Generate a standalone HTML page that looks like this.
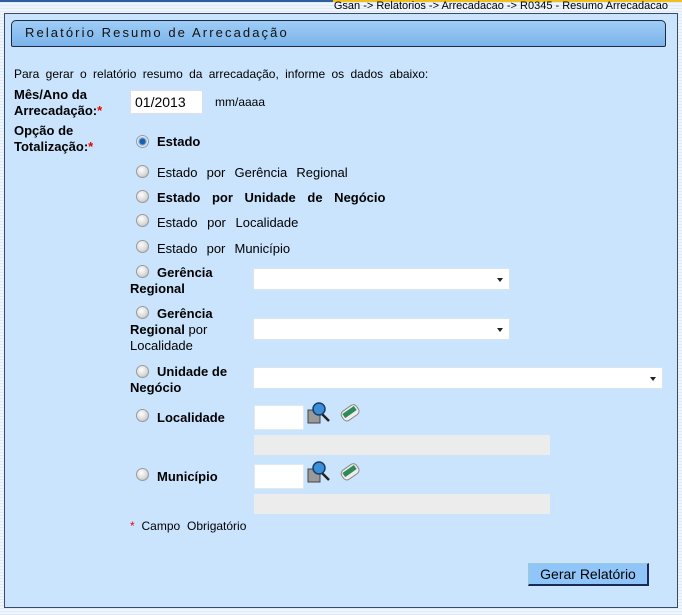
<!DOCTYPE html>
<html><head><meta charset="utf-8"><style>
body{margin:0;width:682px;height:615px;overflow:hidden;position:relative;font-family:"Liberation Sans",Arial,sans-serif;
background:repeating-linear-gradient(#eef5fc 0 2px,#dfeaf6 2px 3px);}
.a{position:absolute;white-space:nowrap}
.b{font-weight:bold;font-size:13px}
.t{font-size:12px}
.rad{position:absolute;width:11px;height:11px;border-radius:50%;background:radial-gradient(circle at 40% 35%,#fff,#d8d8d8 60%,#a8a8a8);border:1px solid #9a9a9a}
.sel{position:absolute;background:#fff;border:1px solid #d8e4f0;height:20px}
.sel:after{content:"";position:absolute;right:6px;top:9px;border:3.5px solid transparent;border-top:4px solid #222}
.inp{position:absolute;background:#fff;border:1px solid #c8d8e8}
.gray{position:absolute;background:#ececec}
</style></head><body>
<div class="a" style="left:0;top:0;width:682px;height:2px;background:#2f5f9c"></div>
<div class="a" style="left:333px;top:0;width:349px;height:2px;background:#f0c020"></div>
<div class="a" style="right:14px;top:0px;font-size:11px;color:#000">Gsan -&gt; Relatorios -&gt; Arrecadacao -&gt; R0345 - Resumo Arrecadacao</div>
<div class="a" style="left:4px;top:13px;width:672px;height:593px;background:#cbe4fd;border:1px solid #3a4a66"></div>
<div class="a" style="left:11px;top:20px;width:653px;height:25px;border:1px solid #1e2a44;border-radius:5px 5px 2px 2px;background:linear-gradient(#9fcdf6,#7bb3ea);"></div>
<div class="a" style="left:25px;top:25px;font-size:13px;letter-spacing:2.1px;color:#111">Relatório Resumo de Arrecadação</div>
<div class="a t" style="left:14px;top:67px;word-spacing:3px">Para gerar o relatório resumo da arrecadação, informe os dados abaixo:</div>
<div class="a b" style="left:14px;top:87px;line-height:16px">Mês/Ano da<br>Arrecadação:<span style="color:#e00">*</span></div>
<div class="inp" style="left:130px;top:90px;width:71px;height:22px;border-color:#dde"></div>
<div class="a" style="left:135px;top:94px;font-size:14px">01/2013</div>
<div class="a t" style="left:215px;top:95px">mm/aaaa</div>
<div class="a b" style="left:14px;top:123px;line-height:16px">Opção de<br>Totalização:<span style="color:#e00">*</span></div>
<div class="rad" style="left:136px;top:135px;background:radial-gradient(circle,#1d5fa8 0 2.5px,#7ab0e0 3.5px,#e8f0f8 5px)"></div>
<div class="a b" style="left:157px;top:134px">Estado</div>
<div class="rad" style="left:136px;top:165px"></div><div class="a b" style="left:157px;top:165px;font-weight:normal;word-spacing:5.5px">Estado por Gerência Regional</div>
<div class="rad" style="left:136px;top:190px"></div><div class="a b" style="left:157px;top:190px;word-spacing:8px">Estado por Unidade de Negócio</div>
<div class="rad" style="left:136px;top:214px"></div><div class="a b" style="left:157px;top:215px;font-weight:normal;word-spacing:6px">Estado por Localidade</div>
<div class="rad" style="left:136px;top:240px"></div><div class="a b" style="left:157px;top:241px;font-weight:normal;word-spacing:5.5px">Estado por Município</div>
<div class="rad" style="left:136px;top:265px"></div>
<div class="a b" style="left:130px;top:265px;line-height:16px"><span style="padding-left:27px">Gerência</span><br>Regional</div>
<div class="sel" style="left:253px;top:268px;width:255px"></div>
<div class="rad" style="left:136px;top:306px"></div>
<div class="a b" style="left:130px;top:306px;line-height:16px"><span style="padding-left:27px">Gerência</span><br>Regional <span style="font-weight:normal">por</span><br><span style="font-weight:normal">Localidade</span></div>
<div class="sel" style="left:253px;top:318px;width:255px"></div>
<div class="rad" style="left:136px;top:365px"></div>
<div class="a b" style="left:130px;top:364px;line-height:16px"><span style="padding-left:27px">Unidade de</span><br>Negócio</div>
<div class="sel" style="left:253px;top:367px;width:408px"></div>
<div class="rad" style="left:136px;top:409px"></div><div class="a b" style="left:157px;top:410px">Localidade</div>
<div class="inp" style="left:254px;top:405px;width:48px;height:23px;border-color:#e0e8f0"></div>
<div class="gray" style="left:254px;top:435px;width:296px;height:20px"></div>
<div class="rad" style="left:136px;top:468px"></div><div class="a b" style="left:157px;top:469px">Município</div>
<div class="inp" style="left:254px;top:464px;width:48px;height:23px;border-color:#e0e8f0"></div>
<div class="gray" style="left:254px;top:494px;width:296px;height:20px"></div>
<svg class="a" style="left:307px;top:401px" width="56" height="26" viewBox="0 0 56 26">
<rect x="1" y="9" width="12" height="13" fill="#9a9a9a" stroke="#444"/>
<line x1="15" y1="13" x2="22" y2="20" stroke="#222" stroke-width="2.5"/>
<circle cx="12" cy="8" r="6" fill="#3c8ed8" stroke="#1a3c6a" stroke-width="1.5"/>
<g transform="translate(31,0) rotate(-35 11 12)"><rect x="3" y="7" width="18" height="11" rx="4" fill="#eee" stroke="#888"/><rect x="5" y="9" width="14" height="5" fill="#2f8a5a"/></g>
</svg>
<svg class="a" style="left:307px;top:460px" width="56" height="26" viewBox="0 0 56 26">
<rect x="1" y="9" width="12" height="13" fill="#9a9a9a" stroke="#444"/>
<line x1="15" y1="13" x2="22" y2="20" stroke="#222" stroke-width="2.5"/>
<circle cx="12" cy="8" r="6" fill="#3c8ed8" stroke="#1a3c6a" stroke-width="1.5"/>
<g transform="translate(31,0) rotate(-35 11 12)"><rect x="3" y="7" width="18" height="11" rx="4" fill="#eee" stroke="#888"/><rect x="5" y="9" width="14" height="5" fill="#2f8a5a"/></g>
</svg>
<div class="a t" style="left:130px;top:519px;word-spacing:3.5px"><span style="color:#e00">*</span> Campo Obrigatório</div>
<div class="a" style="left:528px;top:563px;width:118px;height:20px;background:#8fc5f9;border:1px solid #9cc;border-right:2px solid #1a2a55;border-bottom:2px solid #1a2a55;font-size:14px;text-align:center;line-height:20px">Gerar Relatório</div>
</body></html>
